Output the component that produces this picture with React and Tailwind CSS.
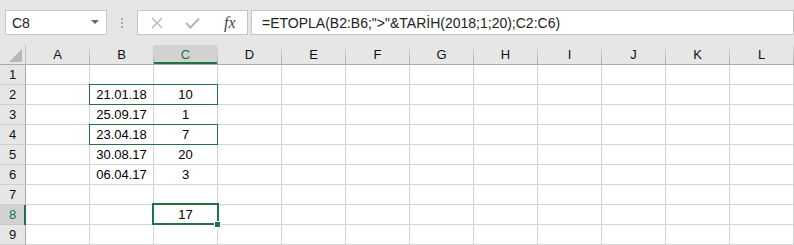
import React from "react";

const COLS = ["A", "B", "C", "D", "E", "F", "G", "H", "I", "J", "K", "L"];
const DATA = {
  2: { B: "21.01.18", C: "10" },
  3: { B: "25.09.17", C: "1" },
  4: { B: "23.04.18", C: "7" },
  5: { B: "30.08.17", C: "20" },
  6: { B: "06.04.17", C: "3" },
  8: { C: "17" },
};

export default function App() {
  return (
    <div className="w-[794px] h-[245px] overflow-hidden bg-white font-['Liberation_Sans',Arial,sans-serif] text-[#222]">
      {/* Top bar */}
      <div className="h-[45px] bg-[#e6e6e6] flex items-start pt-[10px]">
        <div className="ml-[5px] w-[102px] h-[25px] bg-white border border-[#c6c6c6] flex items-center pl-[6px] pr-[6px]">
          <span className="text-[14px] text-[#222] flex-1 leading-none">C8</span>
          <svg width="8" height="5" viewBox="0 0 8 5" className="mr-[1px]">
            <path d="M0 0 L8 0 L4 4 Z" fill="#666" />
          </svg>
        </div>
        <div className="w-[30px] h-[25px] flex flex-col items-center justify-center gap-[2px]">
          <div className="w-[2px] h-[2px] bg-[#a8a8a8]" />
          <div className="w-[2px] h-[2px] bg-[#a8a8a8]" />
          <div className="w-[2px] h-[2px] bg-[#a8a8a8]" />
        </div>
        <div className="w-[111px] h-[25px] bg-white border border-[#c6c6c6] flex items-center">
          <svg width="12" height="12" viewBox="0 0 12 12" className="ml-[13px]">
            <path d="M1 1 L11 11 M11 1 L1 11" stroke="#b4b4b4" strokeWidth="1.3" fill="none" />
          </svg>
          <svg width="15" height="12" viewBox="0 0 15 12" className="ml-[22px]">
            <path d="M1 6 L5.5 10.5 L14 1.5" stroke="#b4b4b4" strokeWidth="2" fill="none" />
          </svg>
          <span className="ml-[24px] font-['Liberation_Serif',serif] italic text-[16px] text-[#444] leading-none">
            fx
          </span>
        </div>
        <div className="ml-[3px] flex-1 h-[25px] bg-white border border-[#c6c6c6] flex items-center pl-[10px]">
          <span className="text-[14px] text-[#222] leading-none whitespace-nowrap">
            =ETOPLA(B2:B6;"&gt;"&amp;TARİH(2018;1;20);C2:C6)
          </span>
        </div>
      </div>

      {/* Grid */}
      <div className="relative">
        {/* Column header */}
        <div className="flex h-[20px] bg-[#e6e6e6] border-b border-[#ababab]">
          <div className="w-[26px] h-full border-r border-[#c0c0c0] flex items-end justify-end pr-[3px] pb-[2px]">
            <svg width="13" height="13" viewBox="0 0 13 13">
              <path d="M13 0 L13 13 L0 13 Z" fill="#b7b7b7" />
            </svg>
          </div>
          {COLS.map((c) => (
            <div
              key={c}
              className={
                c === "C"
                  ? "relative w-[64px] h-full flex bg-[#d2d2d2]"
                  : "relative w-[64px] h-full flex"
              }
            >
              <div
                className={
                  c === "C"
                    ? "flex-1 flex items-center justify-center text-[13px] text-[#217346]"
                    : "flex-1 flex items-center justify-center text-[13px] text-[#111]"
                }
              >
                {c}
              </div>
              <div className="w-px h-full bg-gradient-to-b from-[#e0e0e0] to-[#ababab]" />
              {c === "C" && (
                <div className="absolute left-0 right-[1px] bottom-0 h-[2px] bg-[#217346]" />
              )}
            </div>
          ))}
        </div>

        {/* Rows */}
        {[1, 2, 3, 4, 5, 6, 7, 8, 9].map((r) => (
          <div key={r} className="flex h-[20px]">
            <div
              className={
                r === 8
                  ? "relative w-[26px] h-full bg-[#d2d2d2] border-r border-b border-r-[#ababab] border-b-[#c8c8c8] flex items-center justify-center text-[13px] text-[#217346]"
                  : "relative w-[26px] h-full bg-[#e6e6e6] border-r border-b border-r-[#ababab] border-b-[#d0d0d0] flex items-center justify-center text-[13px] text-[#111]"
              }
            >
              {r}
              {r === 8 && (
                <div className="absolute right-[-1px] top-0 bottom-[-1px] w-[2px] bg-[#217346]" />
              )}
            </div>
            {COLS.map((c) => (
              <div
                key={c}
                className="w-[64px] h-full border-r border-b border-[#d4d4d4] flex items-center justify-center text-[13px] text-black"
              >
                {DATA[r] && DATA[r][c]}
              </div>
            ))}
          </div>
        ))}

        {/* Conditional highlight outlines */}
        <div className="absolute left-[89px] top-[39px] w-[129px] h-[21px] border border-[#217346] pointer-events-none" />
        <div className="absolute left-[89px] top-[79px] w-[129px] h-[21px] border border-[#217346] pointer-events-none" />

        {/* Active cell C8 */}
        <div className="absolute left-[152px] top-[158px] w-[67px] h-[22px] border-2 border-[#217346] pointer-events-none" />
        <div className="absolute left-[214px] top-[176px] w-[7px] h-[7px] bg-[#217346] border border-white pointer-events-none" />
      </div>
    </div>
  );
}
